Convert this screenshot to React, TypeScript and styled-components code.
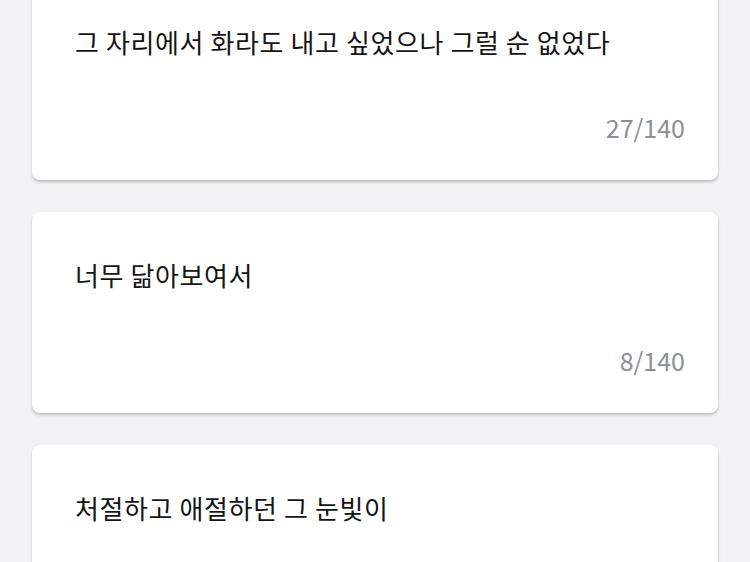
import styled, { createGlobalStyle } from "styled-components";

const GlobalStyle = createGlobalStyle`
  html, body {
    margin: 0;
    padding: 0;
    background: #f1f2f4;
    overflow: hidden;
  }
  body {
    font-family: "Noto Sans CJK KR", "Noto Sans", sans-serif;
  }
`

const Page = styled.div`
  height: 562px;
  overflow: hidden;
`

const List = styled.div`
  display: flex;
  flex-direction: column;
  gap: 32px;
  margin-top: -21px;
  padding: 0 32px;
`

const Card = styled.div`
  background: #fff;
  border-radius: 8px;
  box-shadow: 0 2px 3px rgba(0, 0, 0, 0.22);
  padding: 44px 33px 34px 43px;
  display: flex;
  flex-direction: column;
  gap: 47px;
`

const Sentence = styled.p`
  margin: 0;
  color: #141414;
  font-size: 26px;
  letter-spacing: 0.6px;
  line-height: 38px;
`

const Counter = styled.span`
  align-self: flex-end;
  color: #8b9096;
  font-size: 25px;
  line-height: 38px;
`

const lines = [
  "그 자리에서 화라도 내고 싶었으나 그럴 순 없었다",
  "너무 닮아보여서",
  "처절하고 애절하던 그 눈빛이",
]

const App = () => {
  return (
    <Page>
      <GlobalStyle />
      <List>
        {lines.map((text) => (
          <Card key={text}>
            <Sentence>{text}</Sentence>
            <Counter>{text.length}/140</Counter>
          </Card>
        ))}
      </List>
    </Page>
  )
}

export default App;
